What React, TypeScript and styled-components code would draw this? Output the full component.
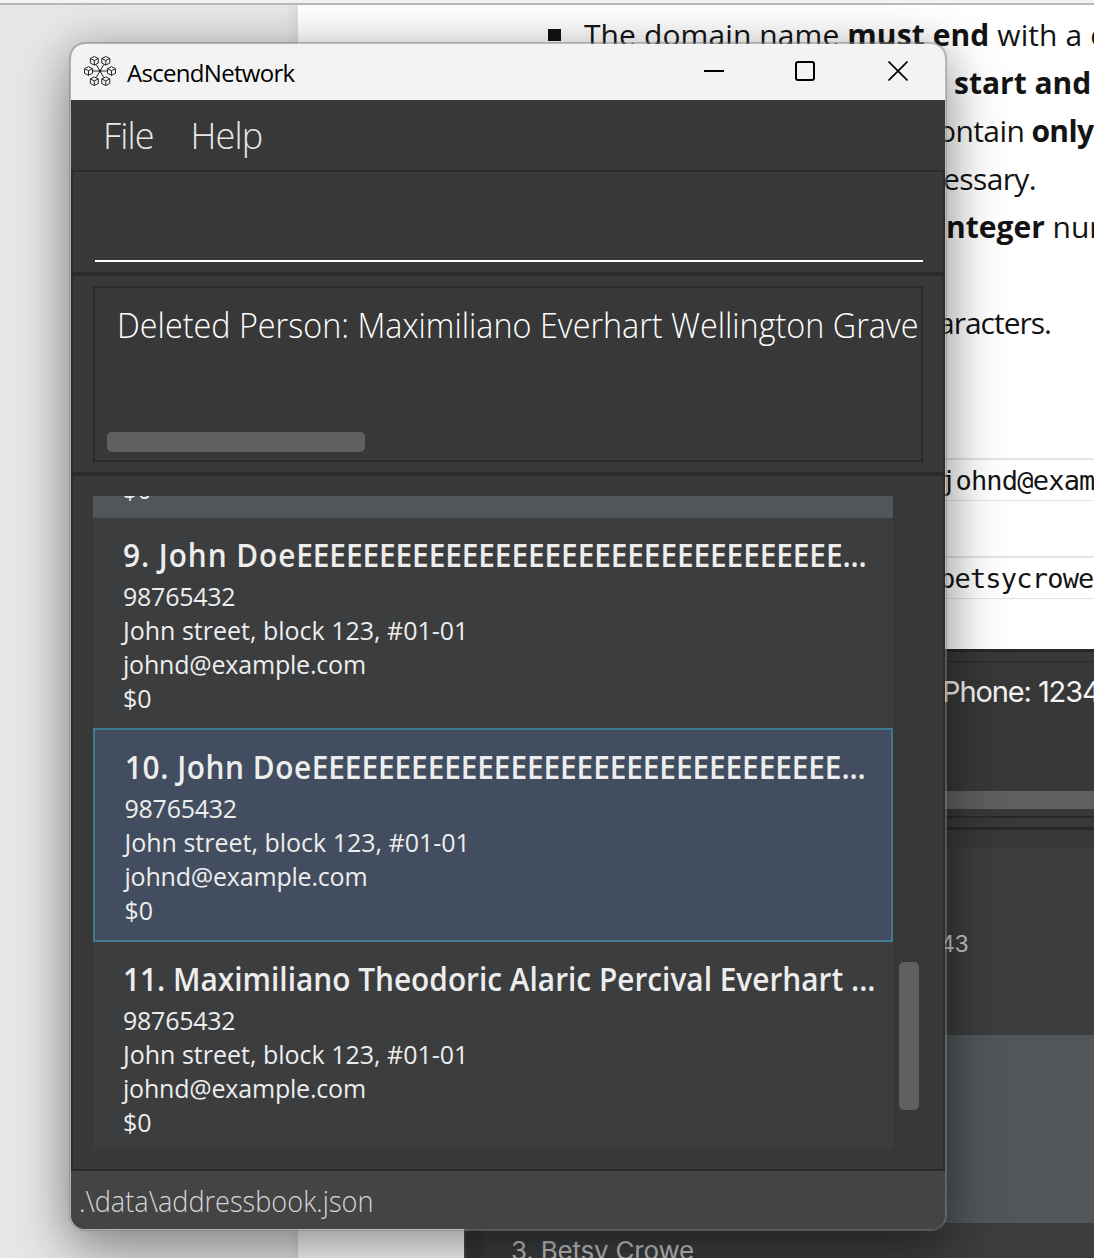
import React from "react";
import styled, { createGlobalStyle } from "styled-components";

const Global = createGlobalStyle`
  * { box-sizing: border-box; }
  html, body { margin: 0; padding: 0; overflow: hidden; background: #fff; }
  body { font-family: "Open Sans", "Noto Sans", sans-serif; }
`;

const Desktop = styled.div`
  position: relative;
  width: 1094px;
  height: 1258px;
  overflow: hidden;
  display: flex;
  flex-direction: column;
  background: #fff;
`;

const BrowserEdge = styled.div`
  flex: none;
  height: 5px;
  background: #f3f3f3;
  border-bottom: 2px solid #b9b9b9;
`;

const BrowserBody = styled.div`
  flex: 1;
  min-height: 0;
  display: flex;
`;

const Gutter = styled.div`
  flex: none;
  width: 298px;
  background: linear-gradient(to right, #e7e7e7 96%, #dcdcdc);
`;

const Article = styled.div`
  flex: 1;
  min-width: 0;
  display: flex;
  flex-direction: column;
  overflow: hidden;
  color: #141414;
`;

const ClippedLine = styled.div`
  flex: none;
  height: 6px;
`;

const Line = styled.div<{ $indent: number; $ls?: number; $gap?: number }>`
  flex: none;
  height: 48px;
  line-height: 48px;
  font-size: 30px;
  white-space: pre;
  margin-bottom: ${(p) => p.$gap ?? 0}px;
  padding-left: ${(p) => p.$indent}px;
  letter-spacing: ${(p) => p.$ls ?? 0}px;
  display: flex;
  align-items: center;
  b { font-weight: 700; }
`;

const Bullet = styled.span`
  flex: none;
  width: 13px;
  height: 12px;
  margin-right: 23px;
  background: #111;
`;

const CodeLine = styled.div<{ $indent: number; $gap: number }>`
  flex: none;
  height: 43px;
  line-height: 41px;
  border-top: 2px solid #e4e4e4;
  border-bottom: 1px solid #e4e4e4;
  font-family: "DejaVu Sans Mono", monospace;
  font-size: 27px;
  letter-spacing: -0.8px;
  white-space: pre;
  padding-left: ${(p) => p.$indent}px;
  margin-bottom: ${(p) => p.$gap}px;
`;

const Shot = styled.div`
  flex: none;
  height: 609px;
  margin-left: 166px;
  display: flex;
  flex-direction: column;
  background: #383838;
  border-top: 3px solid #262827;
  border-left: 2px solid #4a4a4a;
  font-family: "Inter", sans-serif;
`;

const ShotResult = styled.div`
  flex: none;
  height: 157px;
  margin-top: 9px;
  border-top: 1px solid #292929;
  border-bottom: 2px solid #292929;
  display: flex;
  flex-direction: column;
  justify-content: space-between;
  padding-bottom: 7px;
`;

const ShotPhone = styled.div`
  padding-left: 476px;
  line-height: 60px;
  font-size: 29px;
  letter-spacing: -1.1px;
  color: #f4f4f4;
  white-space: nowrap;
`;

const ShotScroll = styled.div`
  height: 18px;
  background: #5f5f5f;
`;

const ShotDivider = styled.div`
  flex: none;
  height: 3px;
  margin: 9px 0 18px;
  background: #292929;
`;

const ShotCard = styled.div<{ $h: number; $alt?: boolean }>`
  flex: none;
  height: ${(p) => p.$h}px;
  margin-left: 18px;
  background: ${(p) => (p.$alt ? "#515658" : "#3c3d3f")};
  color: #c4c4c4;
  font-size: 23px;
`;

const ShotNumber = styled.div`
  padding: 82px 0 0 456px;
  line-height: 28px;
  letter-spacing: -0.4px;
`;

const ShotName = styled.div`
  padding: 11px 0 0 27px;
  font-size: 26px;
  line-height: 34px;
  letter-spacing: -0.2px;
`;

const AppWindow = styled.div`
  position: absolute;
  left: 69px;
  top: 42px;
  width: 878px;
  height: 1189px;
  border: 2px solid rgba(125, 125, 125, 0.5);
  border-radius: 16px;
  background-clip: padding-box;
  box-shadow: 0 22px 60px rgba(0, 0, 0, 0.34), 0 4px 40px rgba(0, 0, 0, 0.18);
  display: flex;
  flex-direction: column;
  overflow: hidden;
  background-color: #383838;
`;

const TitleBar = styled.div`
  flex: none;
  height: 56px;
  display: flex;
  align-items: center;
  padding: 0 37px 2px 13px;
  background: #f3f3f3;
  color: #000;
`;

const Title = styled.span`
  flex: 1;
  margin-left: 11px;
  font-size: 24px;
  line-height: 52px;
  padding-top: 4px;
  letter-spacing: -0.7px;
`;

const WindowButtons = styled.div`
  display: flex;
  gap: 71px;
  align-items: center;
  svg { display: block; }
  svg:last-child { margin-left: 2px; }
`;

const MenuBar = styled.div`
  flex: none;
  height: 70px;
  display: flex;
  gap: 37px;
  padding-left: 32px;
  font-size: 36px;
  font-weight: 300;
  line-height: 72px;
  color: #e8e8e8;
  letter-spacing: -0.9px;
`;

const MenuItem = styled.span``;

const Pane = styled.div<{ $h: number }>`
  flex: none;
  height: ${(p) => p.$h}px;
  border: 2px solid #2b2b2b;
  padding: 0 20px;
  display: flex;
  flex-direction: column;
`;

const CommandField = styled.div`
  height: 90px;
  margin: 0 0 0 2px;
  border-bottom: 2px solid #fff;
`;

const ResultBox = styled.div`
  height: 176px;
  margin-top: 10px;
  border: 2px solid #2b2b2b;
  padding: 12px 0 8px 12px;
  display: flex;
  flex-direction: column;
  justify-content: space-between;
  overflow: hidden;
`;

const ResultText = styled.div`
  margin-left: 10px;
  font-size: 35px;
  line-height: 50px;
  font-weight: 300;
  color: #fff;
  white-space: nowrap;
  transform: scaleX(0.924);
  transform-origin: left;
`;

const HThumb = styled.div`
  width: 258px;
  height: 20px;
  border-radius: 5px;
  background: #606060;
`;

const ListRow = styled.div`
  display: flex;
  height: 653px;
  margin-top: 20px;
`;

const List = styled.div`
  width: 800px;
  height: 653px;
  overflow: hidden;
  display: flex;
  flex-direction: column;
  background: #3c3d3f;
`;

const Track = styled.div`
  padding: 466px 0 0 6px;
`;

const VThumb = styled.div`
  width: 20px;
  height: 148px;
  border-radius: 5px;
  background: #606060;
`;

const PeekCard = styled.div`
  flex: none;
  height: 22px;
  overflow: hidden;
  background: #515658;
  color: #ededed;
  display: flex;
  flex-direction: column;
  justify-content: flex-end;
  padding: 0 0 12px 30px;
`;

const Card = styled.div<{ $selected?: boolean }>`
  flex: none;
  height: ${(p) => (p.$selected ? 214 : 210)}px;
  padding: ${(p) => (p.$selected ? "13px 0 0 29.5px" : "13px 0 0 30px")};
  border: ${(p) => (p.$selected ? "2px solid #3e7b91" : "0")};
  background: ${(p) => (p.$selected ? "#424d5f" : "#3c3d3f")};
  color: #ededed;
`;

const Name = styled.div<{ $ls: number }>`
  height: 48px;
  line-height: 47px;
  font-size: 32px;
  font-weight: 600;
  white-space: nowrap;
  letter-spacing: ${(p) => p.$ls}px;
  transform: scaleX(0.932);
  transform-origin: left;
`;

const Run = styled.span`
  letter-spacing: -0.1px;
`;

const Field = styled.div<{ $ls?: number }>`
  height: 34px;
  line-height: 34px;
  font-size: 25px;
  white-space: nowrap;
  letter-spacing: ${(p) => p.$ls ?? 0}px;
`;

const StatusBar = styled.div`
  flex: 1;
  background: #444;
  color: #d6d6d6;
  padding-left: 8px;
`;

const StatusPath = styled.div`
  font-size: 29px;
  font-weight: 300;
  line-height: 60px;
  transform: scaleX(0.935);
  transform-origin: left;
`;

const CUBES: [number, number][] = [
  [10.3, 4.8], [21.8, 4.8], [4.5, 15], [27.5, 15], [10.3, 25.2], [21.8, 25.2],
];

function NetworkLogo() {
  return (
    <svg width="32" height="30" viewBox="0 0 32 30" fill="none" stroke="#1c1c1c" strokeWidth="0.95">
      {CUBES.map(([x, y]) => (
        <g key={`${x}-${y}`} transform={`translate(${x} ${y})`}>
          <path d="M0-4.3 4-2.3V2.3L0 4.3-4 2.3V-2.3Z M-4-2.3 0-.3 4-2.3 M0-.3V4.3" />
        </g>
      ))}
      <path d="M16 15 12.2 8.5M16 15 19.8 8.5M16 15H8.5M16 15H23.5M16 15 12.2 21.5M16 15 19.8 21.5" />
      <circle cx="16" cy="15" r="1" fill="#222" />
    </svg>
  );
}

interface Person {
  label: string;
  run?: number;
  selected?: boolean;
  ls: number;
}

const PEOPLE: Person[] = [
  { label: "9. John Doe", run: 33, ls: 1 },
  { label: "10. John Doe", run: 32, selected: true, ls: 0.6 },
  { label: "11. Maximiliano Theodoric Alaric Percival Everhart ...", ls: 0 },
];

function PersonCard({ p }: { p: Person }) {
  return (
    <Card $selected={p.selected}>
      <Name $ls={p.ls}>
        {p.label}
        {p.run && <Run>{"E".repeat(p.run)}...</Run>}
      </Name>
      <Field $ls={-0.25}>98765432</Field>
      <Field>John street, block 123, #01-01</Field>
      <Field $ls={-0.2}>johnd@example.com</Field>
      <Field>$0</Field>
    </Card>
  );
}

export default function App() {
  return (
    <Desktop>
      <Global />
      <BrowserEdge />
      <BrowserBody>
        <Gutter />
        <Article>
          <ClippedLine />
          <Line $indent={250} $ls={0.1}><Bullet /><span>The domain name <b>must end</b> with a c</span></Line>
          <Line $indent={656}><b>start and</b></Line>
          <Line $indent={640} $ls={-0.6}><span>ontain <b>only</b></span></Line>
          <Line $indent={645} $ls={-0.6}>essary.</Line>
          <Line $indent={648} $gap={48}><span><b>nteger</b> num</span></Line>
          <Line $indent={640} $ls={-1} $gap={111}>aracters.</Line>
          <CodeLine $indent={642} $gap={55}>johnd@exam</CodeLine>
          <CodeLine $indent={641} $gap={50}>betsycrowe</CodeLine>
          <Shot>
            <ShotResult>
              <ShotPhone>Phone: 1234</ShotPhone>
              <ShotScroll />
            </ShotResult>
            <ShotDivider />
            <ShotCard $h={187}><ShotNumber>43</ShotNumber></ShotCard>
            <ShotCard $h={188} $alt />
            <ShotCard $h={40}><ShotName>3. Betsy Crowe</ShotName></ShotCard>
          </Shot>
        </Article>
      </BrowserBody>

      <AppWindow>
        <TitleBar>
          <NetworkLogo />
          <Title>AscendNetwork</Title>
          <WindowButtons>
            <svg width="20" height="20"><path d="M0 10H20" stroke="#000" strokeWidth="2" /></svg>
            <svg width="20" height="20"><rect x="1" y="1" width="18" height="18" rx="2" fill="none" stroke="#000" strokeWidth="2" /></svg>
            <svg width="20" height="20"><path d="M.5.5 19.5 19.5M19.5.5.5 19.5" stroke="#000" strokeWidth="1.7" /></svg>
          </WindowButtons>
        </TitleBar>
        <MenuBar>
          <MenuItem>File</MenuItem>
          <MenuItem>Help</MenuItem>
        </MenuBar>
        <Pane $h={104}>
          <CommandField />
        </Pane>
        <Pane $h={200}>
          <ResultBox>
            <ResultText>Deleted Person: Maximiliano Everhart Wellington Grave</ResultText>
            <HThumb />
          </ResultBox>
        </Pane>
        <Pane $h={697}>
          <ListRow>
            <List>
              <PeekCard><Field>$0</Field></PeekCard>
              {PEOPLE.map((p) => <PersonCard key={p.label} p={p} />)}
            </List>
            <Track><VThumb /></Track>
          </ListRow>
        </Pane>
        <StatusBar>
          <StatusPath>.\data\addressbook.json</StatusPath>
        </StatusBar>
      </AppWindow>
    </Desktop>
  );
}
